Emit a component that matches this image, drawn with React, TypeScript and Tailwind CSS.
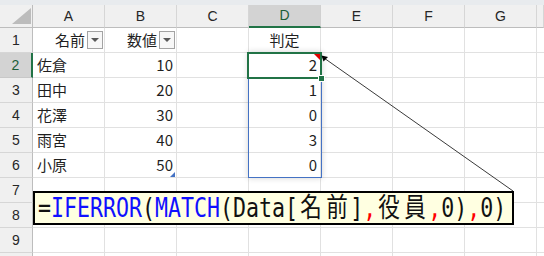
import React from "react";

const cols = ["A", "B", "C", "D", "E", "F", "G", ""];

const rows = [
  { n: 1, a: "名前", b: "数値", d: "判定" },
  { n: 2, a: "佐倉", b: "10", d: "2" },
  { n: 3, a: "田中", b: "20", d: "1" },
  { n: 4, a: "花澤", b: "30", d: "0" },
  { n: 5, a: "雨宮", b: "40", d: "3" },
  { n: 6, a: "小原", b: "50", d: "0" },
  { n: 7, a: "", b: "", d: "" },
  { n: 8, a: "", b: "", d: "" },
  { n: 9, a: "", b: "", d: "" },
  { n: 10, a: "", b: "", d: "" },
];

const FilterButton = () => (
  <div className="ml-[2px] mr-[1px] flex h-[18px] w-[16px] items-center justify-center border border-[#a3a3a3] bg-[#f7f7f7]">
    <svg width="8" height="4" viewBox="0 0 8 4">
      <path d="M0 0 L8 0 L4 4 Z" fill="#595959" />
    </svg>
  </div>
);

// full-width glyph in a two-column slot
const Wide = ({ ch }: { ch: string }) => (
  <span className="inline-block w-[32.5px] text-center">{ch}</span>
);

const App = () => {
  return (
    <div className="relative h-[256px] w-[544px] overflow-hidden bg-white font-['Noto_Sans_CJK_JP',sans-serif] text-[#1f1f1f]">
      {/* top strip */}
      <div className="h-[5px] bg-[#e8ebee]" />

      {/* sheet grid */}
      <div className="grid grid-cols-[33px_repeat(7,72px)_1fr] grid-rows-[23px_repeat(10,25px)]">
        {/* corner */}
        <div className="relative border-b border-r border-[#bdbdbd] bg-[#f0f0f0]">
          <svg className="absolute bottom-[3px] right-[1px]" width="19" height="16" viewBox="0 0 19 16">
            <path d="M19 0 L19 16 L0 16 Z" fill="#bcbcbc" />
          </svg>
        </div>
        {cols.map((c) =>
          c === "D" ? (
            <div
              key={c}
              className="flex items-center justify-center border-b-2 border-r border-b-[#217346] border-r-[#d0d0d0] bg-[#d3d3d3] font-['Liberation_Sans',sans-serif] text-[14px] text-[#1b5e38]"
            >
              {c}
            </div>
          ) : (
            <div
              key={c || "H"}
              className="flex items-center justify-center border-b border-r border-b-[#bdbdbd] border-r-[#d6d6d6] bg-[#f0f0f0] font-['Liberation_Sans',sans-serif] text-[14px] text-[#262626]"
            >
              {c}
            </div>
          )
        )}

        {rows.map((r) => (
          <React.Fragment key={r.n}>
            {r.n === 2 ? (
              <div className="flex items-center justify-center border-b border-r-2 border-b-[#c8c8c8] border-r-[#217346] bg-[#d3d3d3] font-['Liberation_Sans',sans-serif] text-[14px] text-[#1b5e38]">
                {r.n}
              </div>
            ) : (
              <div className="flex items-center justify-center border-b border-r border-b-[#d6d6d6] border-r-[#bdbdbd] bg-[#f0f0f0] font-['Liberation_Sans',sans-serif] text-[14px] text-[#262626]">
                {r.n < 10 ? r.n : ""}
              </div>
            )}

            {/* A */}
            {r.n === 1 ? (
              <div className="flex items-center justify-end border-b border-r border-[#e1e1e1] text-[15px]">
                {r.a}
                <FilterButton />
              </div>
            ) : (
              <div className="flex items-center border-b border-r border-[#e1e1e1] pl-[4px] text-[15px]">
                {r.a}
              </div>
            )}

            {/* B */}
            {r.n === 1 ? (
              <div className="flex items-center justify-end border-b border-r border-[#e1e1e1] text-[15px]">
                {r.b}
                <FilterButton />
              </div>
            ) : (
              <div className="relative flex items-center justify-end border-b border-r border-[#e1e1e1] pr-[3px] text-[15px]">
                {r.b}
                {r.n === 6 && (
                  <svg className="absolute bottom-[0px] right-[1px]" width="5" height="5" viewBox="0 0 5 5">
                    <path d="M5 0 L5 5 L0 5 Z" fill="#4472c4" />
                  </svg>
                )}
              </div>
            )}

            {/* C */}
            <div className="border-b border-r border-[#e1e1e1]" />

            {/* D */}
            {r.n === 1 ? (
              <div className="flex items-center justify-center border-b border-r border-[#e1e1e1] text-[15px]">
                {r.d}
              </div>
            ) : (
              <div className="flex items-center justify-end border-b border-r border-[#e1e1e1] pr-[3px] text-[15px]">
                {r.d}
              </div>
            )}

            {/* E F G H */}
            <div className="border-b border-r border-[#e1e1e1]" />
            <div className="border-b border-r border-[#e1e1e1]" />
            <div className="border-b border-r border-[#e1e1e1]" />
            <div className="border-b border-[#e1e1e1]" />
          </React.Fragment>
        ))}
      </div>

      {/* spill range border D2:D6 */}
      <div className="absolute left-[248px] top-[52px] h-[126px] w-[74px] border border-[#4472c4] shadow-[0_0_6px_rgba(0,0,0,0.18)]" />

      {/* active cell D2 */}
      <div className="absolute left-[247px] top-[52px] h-[27px] w-[75px] border-2 border-[#217346]" />
      <div className="absolute left-[318px] top-[75px] h-[7px] w-[7px] border border-white bg-[#217346]" />
      {/* comment indicator */}
      <svg className="absolute left-[314px] top-[54px]" width="6" height="6" viewBox="0 0 6 6">
        <path d="M0 0 L6 0 L6 6 Z" fill="#e00000" />
      </svg>

      {/* comment leader line */}
      <svg className="pointer-events-none absolute left-0 top-0" width="544" height="256" viewBox="0 0 544 256">
        <line x1="324" y1="58" x2="513" y2="191" stroke="#3a3a3a" strokeWidth="1" />
        <path d="M321.5 55.5 L328 57 L323.5 61.5 Z" fill="#000" />
      </svg>

      {/* comment box */}
      <div className="absolute left-[33px] top-[191px] flex h-[34px] w-[481px] items-center overflow-hidden border-2 border-black bg-[#ffffe1] pl-[3px]">
        <span className="inline-block origin-left scale-x-[0.8] whitespace-nowrap font-['DejaVu_Sans_Mono','Noto_Sans_CJK_JP',monospace] text-[27px] leading-[30px] text-[#111]">
          =<span className="text-[#1010ff]">IFERROR</span>(<span className="text-[#1010ff]">MATCH</span>(Data[
          <Wide ch="名" />
          <Wide ch="前" />]<span className="text-[#ff0000]">,</span>
          <Wide ch="役" />
          <Wide ch="員" />
          <span className="text-[#ff0000]">,</span>0)<span className="text-[#ff0000]">,</span>0)
        </span>
      </div>
    </div>
  );
};

export default App;
